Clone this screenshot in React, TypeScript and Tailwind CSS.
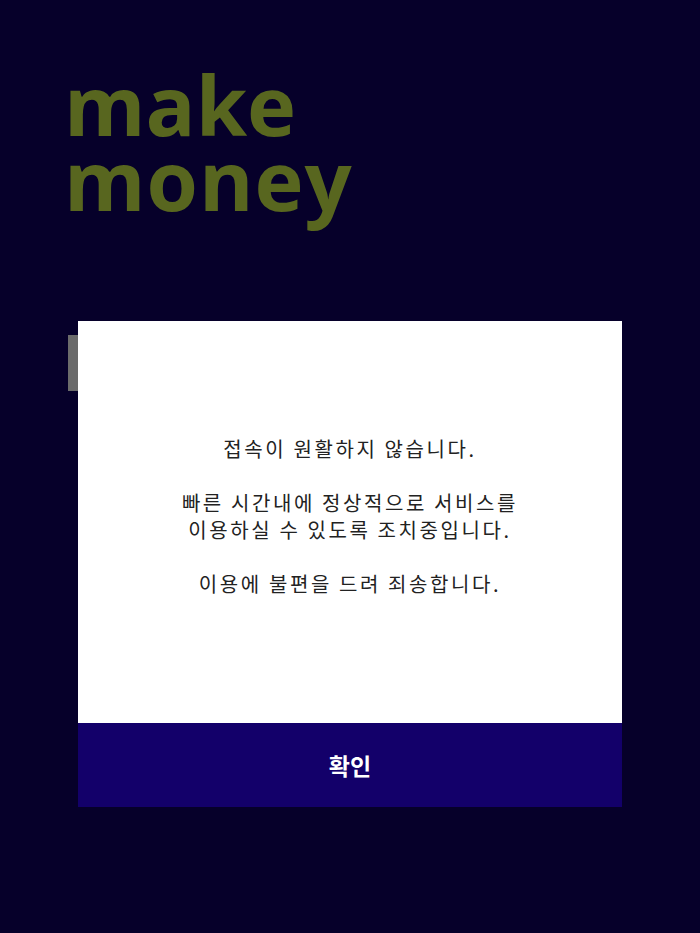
const App = () => {
    return (
        <div className="relative w-[700px] h-[933px] bg-[#06002a] overflow-hidden">
            <div
                className="pt-[66px] pl-[64px] text-[83px] leading-[75px] font-bold text-[#58661f]"
                style={{ fontFamily: "'Open Sans', sans-serif" }}
            >
                <h1 className="h-[75px]">make</h1>
                <h1 className="h-[75px] tracking-[1px]">money</h1>
            </div>
            <div className="absolute left-[68px] top-[335px] w-[12px] h-[56px] bg-[#6b6b6b]"></div>
            <div className="absolute left-[78px] top-[321px] w-[544px] flex flex-col">
                <div
                    className="h-[402px] bg-white flex items-center justify-center text-center text-[20px] leading-[27px] tracking-[2.6px] text-[#222]"
                    style={{ fontFamily: "'Noto Sans CJK KR', sans-serif" }}
                >
                    <p className="-mt-[13px]">
                        접속이 원활하지 않습니다.
                        <br />
                        <br />
                        빠른 시간내에 정상적으로 서비스를
                        <br />
                        이용하실 수 있도록 조치중입니다.
                        <br />
                        <br />
                        이용에 불편을 드려 죄송합니다.
                    </p>
                </div>
                <button
                    className="h-[84px] bg-[#13006a] text-white text-[23px] font-bold"
                    style={{ fontFamily: "'Noto Sans CJK KR', sans-serif" }}
                >
                    확인
                </button>
            </div>
        </div>
    );
};

export default App;
